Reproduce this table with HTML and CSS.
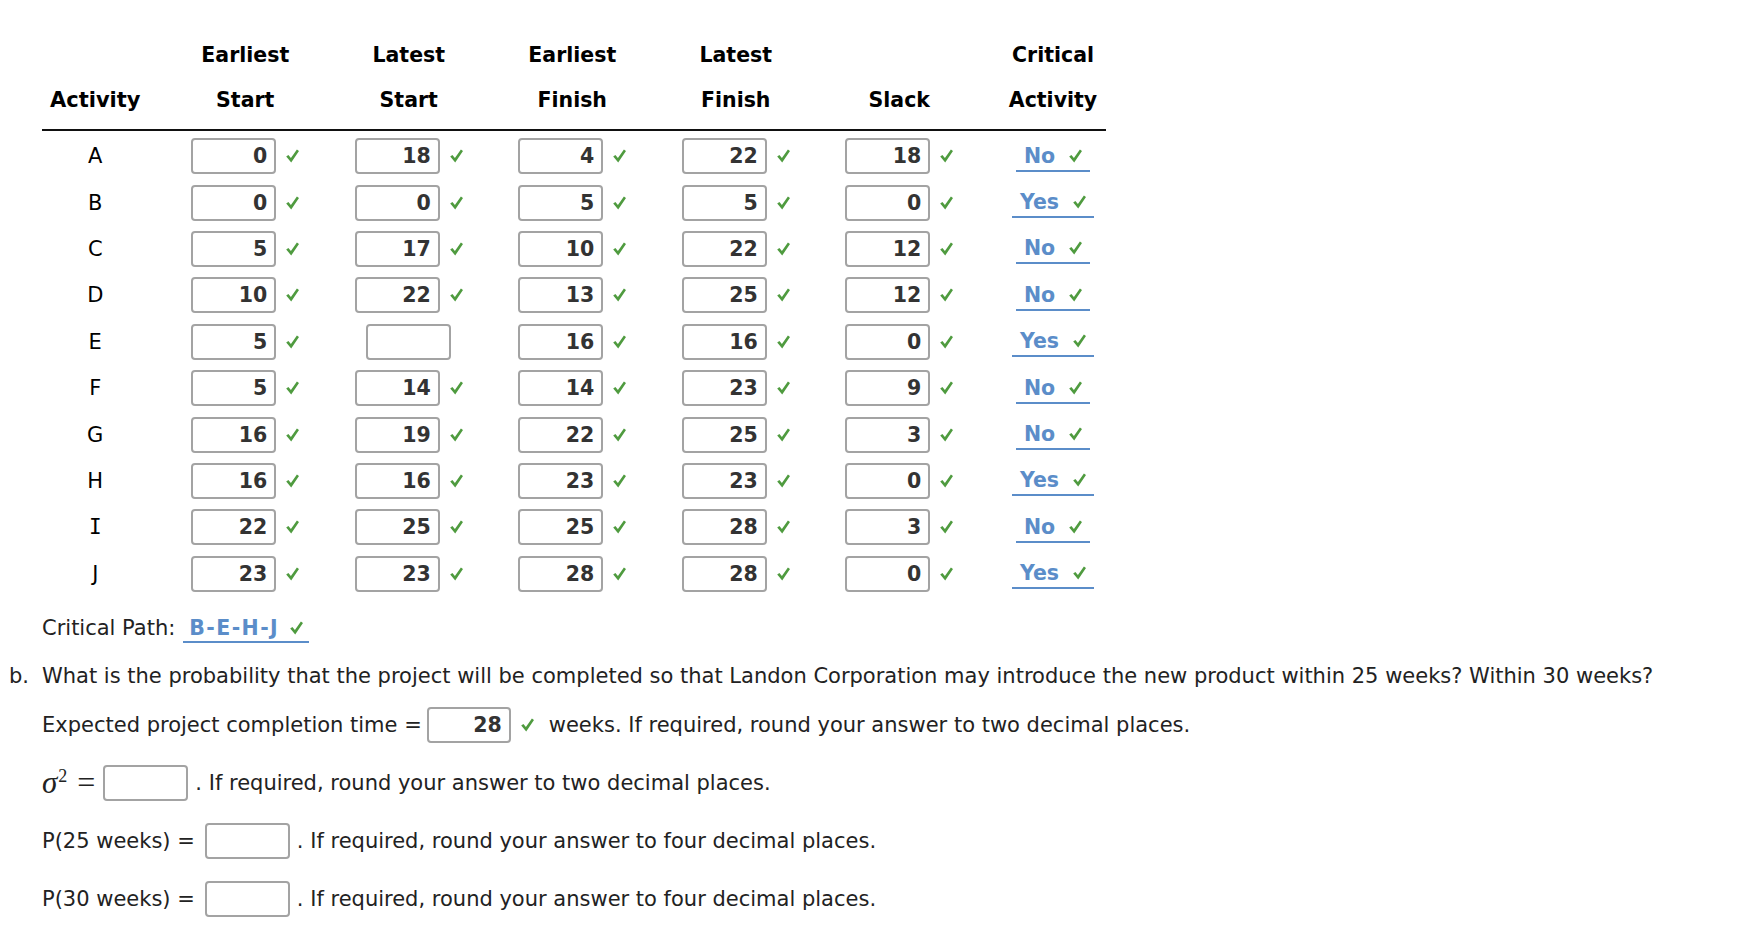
FILE: index.html
```html
<!DOCTYPE html>
<html>
<head>
<meta charset="utf-8">
<title>Project schedule</title>
<link rel="stylesheet" href="styles.css">
</head>
<body>
<main class="page">
  <div class="sched">
    <div class="th act"><span></span><span>Activity</span></div>
    <div class="th"><span>Earliest</span><span>Start</span></div>
    <div class="th"><span>Latest</span><span>Start</span></div>
    <div class="th"><span>Earliest</span><span>Finish</span></div>
    <div class="th"><span>Latest</span><span>Finish</span></div>
    <div class="th"><span></span><span>Slack</span></div>
    <div class="th crit"><span>Critical</span><span>Activity</span></div>

    <div class="td act">A</div>
    <div class="td"><span class="box">0</span><svg class="ok" viewBox="0 0 13 14"><path d="M0.2 7.6L2.4 5.9L4.9 9.1L10.9 0.6L13 2.1L5.2 13.4Z"/></svg></div>
    <div class="td"><span class="box">18</span><svg class="ok" viewBox="0 0 13 14"><path d="M0.2 7.6L2.4 5.9L4.9 9.1L10.9 0.6L13 2.1L5.2 13.4Z"/></svg></div>
    <div class="td"><span class="box">4</span><svg class="ok" viewBox="0 0 13 14"><path d="M0.2 7.6L2.4 5.9L4.9 9.1L10.9 0.6L13 2.1L5.2 13.4Z"/></svg></div>
    <div class="td"><span class="box">22</span><svg class="ok" viewBox="0 0 13 14"><path d="M0.2 7.6L2.4 5.9L4.9 9.1L10.9 0.6L13 2.1L5.2 13.4Z"/></svg></div>
    <div class="td"><span class="box">18</span><svg class="ok" viewBox="0 0 13 14"><path d="M0.2 7.6L2.4 5.9L4.9 9.1L10.9 0.6L13 2.1L5.2 13.4Z"/></svg></div>
    <div class="td crit"><span class="ans">No<svg class="ok" viewBox="0 0 13 14"><path d="M0.2 7.6L2.4 5.9L4.9 9.1L10.9 0.6L13 2.1L5.2 13.4Z"/></svg></span></div>

    <div class="td act">B</div>
    <div class="td"><span class="box">0</span><svg class="ok" viewBox="0 0 13 14"><path d="M0.2 7.6L2.4 5.9L4.9 9.1L10.9 0.6L13 2.1L5.2 13.4Z"/></svg></div>
    <div class="td"><span class="box">0</span><svg class="ok" viewBox="0 0 13 14"><path d="M0.2 7.6L2.4 5.9L4.9 9.1L10.9 0.6L13 2.1L5.2 13.4Z"/></svg></div>
    <div class="td"><span class="box">5</span><svg class="ok" viewBox="0 0 13 14"><path d="M0.2 7.6L2.4 5.9L4.9 9.1L10.9 0.6L13 2.1L5.2 13.4Z"/></svg></div>
    <div class="td"><span class="box">5</span><svg class="ok" viewBox="0 0 13 14"><path d="M0.2 7.6L2.4 5.9L4.9 9.1L10.9 0.6L13 2.1L5.2 13.4Z"/></svg></div>
    <div class="td"><span class="box">0</span><svg class="ok" viewBox="0 0 13 14"><path d="M0.2 7.6L2.4 5.9L4.9 9.1L10.9 0.6L13 2.1L5.2 13.4Z"/></svg></div>
    <div class="td crit"><span class="ans">Yes<svg class="ok" viewBox="0 0 13 14"><path d="M0.2 7.6L2.4 5.9L4.9 9.1L10.9 0.6L13 2.1L5.2 13.4Z"/></svg></span></div>

    <div class="td act">C</div>
    <div class="td"><span class="box">5</span><svg class="ok" viewBox="0 0 13 14"><path d="M0.2 7.6L2.4 5.9L4.9 9.1L10.9 0.6L13 2.1L5.2 13.4Z"/></svg></div>
    <div class="td"><span class="box">17</span><svg class="ok" viewBox="0 0 13 14"><path d="M0.2 7.6L2.4 5.9L4.9 9.1L10.9 0.6L13 2.1L5.2 13.4Z"/></svg></div>
    <div class="td"><span class="box">10</span><svg class="ok" viewBox="0 0 13 14"><path d="M0.2 7.6L2.4 5.9L4.9 9.1L10.9 0.6L13 2.1L5.2 13.4Z"/></svg></div>
    <div class="td"><span class="box">22</span><svg class="ok" viewBox="0 0 13 14"><path d="M0.2 7.6L2.4 5.9L4.9 9.1L10.9 0.6L13 2.1L5.2 13.4Z"/></svg></div>
    <div class="td"><span class="box">12</span><svg class="ok" viewBox="0 0 13 14"><path d="M0.2 7.6L2.4 5.9L4.9 9.1L10.9 0.6L13 2.1L5.2 13.4Z"/></svg></div>
    <div class="td crit"><span class="ans">No<svg class="ok" viewBox="0 0 13 14"><path d="M0.2 7.6L2.4 5.9L4.9 9.1L10.9 0.6L13 2.1L5.2 13.4Z"/></svg></span></div>

    <div class="td act">D</div>
    <div class="td"><span class="box">10</span><svg class="ok" viewBox="0 0 13 14"><path d="M0.2 7.6L2.4 5.9L4.9 9.1L10.9 0.6L13 2.1L5.2 13.4Z"/></svg></div>
    <div class="td"><span class="box">22</span><svg class="ok" viewBox="0 0 13 14"><path d="M0.2 7.6L2.4 5.9L4.9 9.1L10.9 0.6L13 2.1L5.2 13.4Z"/></svg></div>
    <div class="td"><span class="box">13</span><svg class="ok" viewBox="0 0 13 14"><path d="M0.2 7.6L2.4 5.9L4.9 9.1L10.9 0.6L13 2.1L5.2 13.4Z"/></svg></div>
    <div class="td"><span class="box">25</span><svg class="ok" viewBox="0 0 13 14"><path d="M0.2 7.6L2.4 5.9L4.9 9.1L10.9 0.6L13 2.1L5.2 13.4Z"/></svg></div>
    <div class="td"><span class="box">12</span><svg class="ok" viewBox="0 0 13 14"><path d="M0.2 7.6L2.4 5.9L4.9 9.1L10.9 0.6L13 2.1L5.2 13.4Z"/></svg></div>
    <div class="td crit"><span class="ans">No<svg class="ok" viewBox="0 0 13 14"><path d="M0.2 7.6L2.4 5.9L4.9 9.1L10.9 0.6L13 2.1L5.2 13.4Z"/></svg></span></div>

    <div class="td act">E</div>
    <div class="td"><span class="box">5</span><svg class="ok" viewBox="0 0 13 14"><path d="M0.2 7.6L2.4 5.9L4.9 9.1L10.9 0.6L13 2.1L5.2 13.4Z"/></svg></div>
    <div class="td"><span class="box"></span></div>
    <div class="td"><span class="box">16</span><svg class="ok" viewBox="0 0 13 14"><path d="M0.2 7.6L2.4 5.9L4.9 9.1L10.9 0.6L13 2.1L5.2 13.4Z"/></svg></div>
    <div class="td"><span class="box">16</span><svg class="ok" viewBox="0 0 13 14"><path d="M0.2 7.6L2.4 5.9L4.9 9.1L10.9 0.6L13 2.1L5.2 13.4Z"/></svg></div>
    <div class="td"><span class="box">0</span><svg class="ok" viewBox="0 0 13 14"><path d="M0.2 7.6L2.4 5.9L4.9 9.1L10.9 0.6L13 2.1L5.2 13.4Z"/></svg></div>
    <div class="td crit"><span class="ans">Yes<svg class="ok" viewBox="0 0 13 14"><path d="M0.2 7.6L2.4 5.9L4.9 9.1L10.9 0.6L13 2.1L5.2 13.4Z"/></svg></span></div>

    <div class="td act">F</div>
    <div class="td"><span class="box">5</span><svg class="ok" viewBox="0 0 13 14"><path d="M0.2 7.6L2.4 5.9L4.9 9.1L10.9 0.6L13 2.1L5.2 13.4Z"/></svg></div>
    <div class="td"><span class="box">14</span><svg class="ok" viewBox="0 0 13 14"><path d="M0.2 7.6L2.4 5.9L4.9 9.1L10.9 0.6L13 2.1L5.2 13.4Z"/></svg></div>
    <div class="td"><span class="box">14</span><svg class="ok" viewBox="0 0 13 14"><path d="M0.2 7.6L2.4 5.9L4.9 9.1L10.9 0.6L13 2.1L5.2 13.4Z"/></svg></div>
    <div class="td"><span class="box">23</span><svg class="ok" viewBox="0 0 13 14"><path d="M0.2 7.6L2.4 5.9L4.9 9.1L10.9 0.6L13 2.1L5.2 13.4Z"/></svg></div>
    <div class="td"><span class="box">9</span><svg class="ok" viewBox="0 0 13 14"><path d="M0.2 7.6L2.4 5.9L4.9 9.1L10.9 0.6L13 2.1L5.2 13.4Z"/></svg></div>
    <div class="td crit"><span class="ans">No<svg class="ok" viewBox="0 0 13 14"><path d="M0.2 7.6L2.4 5.9L4.9 9.1L10.9 0.6L13 2.1L5.2 13.4Z"/></svg></span></div>

    <div class="td act">G</div>
    <div class="td"><span class="box">16</span><svg class="ok" viewBox="0 0 13 14"><path d="M0.2 7.6L2.4 5.9L4.9 9.1L10.9 0.6L13 2.1L5.2 13.4Z"/></svg></div>
    <div class="td"><span class="box">19</span><svg class="ok" viewBox="0 0 13 14"><path d="M0.2 7.6L2.4 5.9L4.9 9.1L10.9 0.6L13 2.1L5.2 13.4Z"/></svg></div>
    <div class="td"><span class="box">22</span><svg class="ok" viewBox="0 0 13 14"><path d="M0.2 7.6L2.4 5.9L4.9 9.1L10.9 0.6L13 2.1L5.2 13.4Z"/></svg></div>
    <div class="td"><span class="box">25</span><svg class="ok" viewBox="0 0 13 14"><path d="M0.2 7.6L2.4 5.9L4.9 9.1L10.9 0.6L13 2.1L5.2 13.4Z"/></svg></div>
    <div class="td"><span class="box">3</span><svg class="ok" viewBox="0 0 13 14"><path d="M0.2 7.6L2.4 5.9L4.9 9.1L10.9 0.6L13 2.1L5.2 13.4Z"/></svg></div>
    <div class="td crit"><span class="ans">No<svg class="ok" viewBox="0 0 13 14"><path d="M0.2 7.6L2.4 5.9L4.9 9.1L10.9 0.6L13 2.1L5.2 13.4Z"/></svg></span></div>

    <div class="td act">H</div>
    <div class="td"><span class="box">16</span><svg class="ok" viewBox="0 0 13 14"><path d="M0.2 7.6L2.4 5.9L4.9 9.1L10.9 0.6L13 2.1L5.2 13.4Z"/></svg></div>
    <div class="td"><span class="box">16</span><svg class="ok" viewBox="0 0 13 14"><path d="M0.2 7.6L2.4 5.9L4.9 9.1L10.9 0.6L13 2.1L5.2 13.4Z"/></svg></div>
    <div class="td"><span class="box">23</span><svg class="ok" viewBox="0 0 13 14"><path d="M0.2 7.6L2.4 5.9L4.9 9.1L10.9 0.6L13 2.1L5.2 13.4Z"/></svg></div>
    <div class="td"><span class="box">23</span><svg class="ok" viewBox="0 0 13 14"><path d="M0.2 7.6L2.4 5.9L4.9 9.1L10.9 0.6L13 2.1L5.2 13.4Z"/></svg></div>
    <div class="td"><span class="box">0</span><svg class="ok" viewBox="0 0 13 14"><path d="M0.2 7.6L2.4 5.9L4.9 9.1L10.9 0.6L13 2.1L5.2 13.4Z"/></svg></div>
    <div class="td crit"><span class="ans">Yes<svg class="ok" viewBox="0 0 13 14"><path d="M0.2 7.6L2.4 5.9L4.9 9.1L10.9 0.6L13 2.1L5.2 13.4Z"/></svg></span></div>

    <div class="td act"><span class="serif-i">I</span></div>
    <div class="td"><span class="box">22</span><svg class="ok" viewBox="0 0 13 14"><path d="M0.2 7.6L2.4 5.9L4.9 9.1L10.9 0.6L13 2.1L5.2 13.4Z"/></svg></div>
    <div class="td"><span class="box">25</span><svg class="ok" viewBox="0 0 13 14"><path d="M0.2 7.6L2.4 5.9L4.9 9.1L10.9 0.6L13 2.1L5.2 13.4Z"/></svg></div>
    <div class="td"><span class="box">25</span><svg class="ok" viewBox="0 0 13 14"><path d="M0.2 7.6L2.4 5.9L4.9 9.1L10.9 0.6L13 2.1L5.2 13.4Z"/></svg></div>
    <div class="td"><span class="box">28</span><svg class="ok" viewBox="0 0 13 14"><path d="M0.2 7.6L2.4 5.9L4.9 9.1L10.9 0.6L13 2.1L5.2 13.4Z"/></svg></div>
    <div class="td"><span class="box">3</span><svg class="ok" viewBox="0 0 13 14"><path d="M0.2 7.6L2.4 5.9L4.9 9.1L10.9 0.6L13 2.1L5.2 13.4Z"/></svg></div>
    <div class="td crit"><span class="ans">No<svg class="ok" viewBox="0 0 13 14"><path d="M0.2 7.6L2.4 5.9L4.9 9.1L10.9 0.6L13 2.1L5.2 13.4Z"/></svg></span></div>

    <div class="td act">J</div>
    <div class="td"><span class="box">23</span><svg class="ok" viewBox="0 0 13 14"><path d="M0.2 7.6L2.4 5.9L4.9 9.1L10.9 0.6L13 2.1L5.2 13.4Z"/></svg></div>
    <div class="td"><span class="box">23</span><svg class="ok" viewBox="0 0 13 14"><path d="M0.2 7.6L2.4 5.9L4.9 9.1L10.9 0.6L13 2.1L5.2 13.4Z"/></svg></div>
    <div class="td"><span class="box">28</span><svg class="ok" viewBox="0 0 13 14"><path d="M0.2 7.6L2.4 5.9L4.9 9.1L10.9 0.6L13 2.1L5.2 13.4Z"/></svg></div>
    <div class="td"><span class="box">28</span><svg class="ok" viewBox="0 0 13 14"><path d="M0.2 7.6L2.4 5.9L4.9 9.1L10.9 0.6L13 2.1L5.2 13.4Z"/></svg></div>
    <div class="td"><span class="box">0</span><svg class="ok" viewBox="0 0 13 14"><path d="M0.2 7.6L2.4 5.9L4.9 9.1L10.9 0.6L13 2.1L5.2 13.4Z"/></svg></div>
    <div class="td crit"><span class="ans">Yes<svg class="ok" viewBox="0 0 13 14"><path d="M0.2 7.6L2.4 5.9L4.9 9.1L10.9 0.6L13 2.1L5.2 13.4Z"/></svg></span></div>
  </div>

  <div class="qline q-crit">
    <span>Critical Path:</span>
    <span class="ans path"><span class="path-txt">B-E-H-J</span><svg class="ok" viewBox="0 0 13 14"><path d="M0.2 7.6L2.4 5.9L4.9 9.1L10.9 0.6L13 2.1L5.2 13.4Z"/></svg></span>
  </div>

  <div class="qline q-b">
    <span class="lbl">b.</span>
    <span>What is the probability that the project will be completed so that Landon Corporation may introduce the new product within 25 weeks? Within 30 weeks?</span>
  </div>

  <div class="qline q-exp">
    <span>Expected project completion time =</span>
    <span class="box exp-box">28</span>
    <svg class="ok" viewBox="0 0 13 14"><path d="M0.2 7.6L2.4 5.9L4.9 9.1L10.9 0.6L13 2.1L5.2 13.4Z"/></svg>
    <span class="after-ok">weeks. If required, round your answer to two decimal places.</span>
  </div>

  <div class="qline q-sig">
    <span class="math"><i class="sigma">σ</i><sup>2</sup><span class="eq">=</span></span>
    <span class="box sig-box"></span>
    <span class="tail">. If required, round your answer to two decimal places.</span>
  </div>

  <div class="qline q-p">
    <span>P(25 weeks) =</span>
    <span class="box p-box"></span>
    <span class="tail">. If required, round your answer to four decimal places.</span>
  </div>

  <div class="qline q-p">
    <span>P(30 weeks) =</span>
    <span class="box p-box"></span>
    <span class="tail">. If required, round your answer to four decimal places.</span>
  </div>
</main>
</body>
</html>
```

FILE: styles.css
```css
* { box-sizing: border-box; }

html, body {
  margin: 0;
  background: #ffffff;
}

body {
  font-family: "DejaVu Sans", Verdana, sans-serif;
  font-size: 21px;
  color: #222222;
}

.page {
  padding: 31.5px 0 0 42px;
}

/* ---------- schedule table ---------- */
.sched {
  display: grid;
  grid-template-columns: 121.5px repeat(5, 163.5px) 125px;
  width: 1064px;
  font-size: 20.5px;
}

.th {
  display: flex;
  flex-direction: column;
  align-items: center;
  font-weight: bold;
  color: #000000;
  padding-top: 1px;
  padding-bottom: 6.5px;
  border-bottom: 2px solid #111111;
}

.th span {
  height: 45px;
  line-height: 45px;
  white-space: nowrap;
}

.td {
  height: 46.4px;
  padding-top: 4px;
  display: flex;
  align-items: center;
  justify-content: center;
}

.act {
  padding-right: 15px;
  color: #000000;
  font-size: 21px;
}

.serif-i {
  font-family: "DejaVu Sans Mono", monospace;
  font-size: 21px;
}

.crit {
  padding-left: 19px;
}

.box {
  width: 85px;
  height: 36px;
  flex: none;
  border: 2px solid #a3a3a3;
  border-radius: 4px;
  display: flex;
  align-items: center;
  justify-content: flex-end;
  padding-right: 7px;
  font-weight: bold;
  font-size: 20.5px;
  color: #333333;
  background: #ffffff;
}

.ok {
  width: 13px;
  height: 14px;
  margin-left: 10px;
  flex: none;
  fill: #4f9b3f;
}

.ans {
  display: inline-flex;
  align-items: center;
  gap: 14px;
  padding: 3px 8px 2px;
  line-height: 24px;
  border-bottom: 2px solid #5b8dc9;
  color: #5b8dc9;
  font-weight: bold;
  font-size: 20.5px;
  white-space: nowrap;
}

.ans .ok {
  margin-left: 0;
}

/* ---------- question lines ---------- */
.qline {
  display: flex;
  align-items: center;
  white-space: nowrap;
}

.q-crit {
  margin-top: 9.5px;
  height: 48px;
}

.q-crit .path {
  margin-left: 8px;
  padding: 3px 6px 1px;
  gap: 11px;
}

.path-txt {
  letter-spacing: 1.4px;
}

.q-b {
  height: 48px;
  margin-left: -33px;
}

.q-b .lbl {
  width: 33px;
  flex: none;
}

.q-exp {
  height: 49px;
}

.exp-box {
  width: 84px;
  margin-left: 5px;
}

.after-ok {
  margin-left: 15px;
}

.q-sig {
  margin-top: 4.5px;
  height: 58px;
}

.math {
  display: inline-block;
  font-family: "Liberation Serif", "DejaVu Serif", serif;
  font-size: 30px;
  line-height: 30px;
  color: #222222;
}

.math .sigma {
  font-style: italic;
  font-size: 31px;
}

.math sup {
  font-size: 18px;
  vertical-align: 11px;
  line-height: 0;
  margin-left: 1px;
}

.math .eq {
  margin-left: 10px;
  font-size: 32px;
}

.sig-box {
  margin-left: 8px;
}

.tail {
  margin-left: 7px;
}

.q-p {
  height: 58px;
}

.p-box {
  margin-left: 10px;
}
```
